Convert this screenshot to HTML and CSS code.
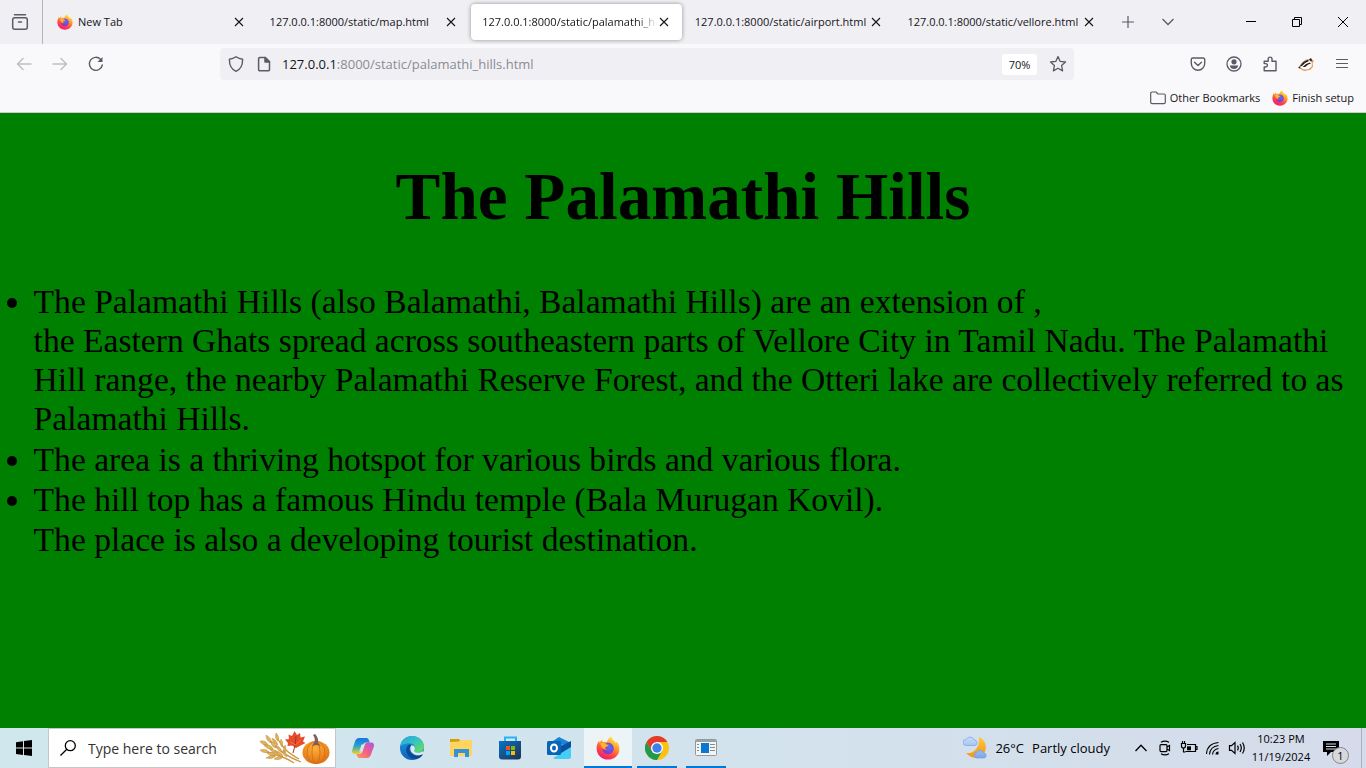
FILE: index.html
```html
<!DOCTYPE html>
<html lang="en">
<head>
<meta charset="utf-8">
<meta name="viewport" content="width=device-width, initial-scale=1">
<title>The Palamathi Hills</title>
<link rel="stylesheet" href="styles.css">
</head>
<body>
<svg class="defs" aria-hidden="true">
  <defs>
    <linearGradient id="fx-body" x1=".8" y1="0" x2=".3" y2="1"><stop offset="0" stop-color="#fff44f"/><stop offset=".35" stop-color="#ffa72b"/><stop offset=".65" stop-color="#ff4f3e"/><stop offset="1" stop-color="#f0147a"/></linearGradient>
    <radialGradient id="fx-core" cx=".6" cy=".4" r=".7"><stop offset="0" stop-color="#5b6df8"/><stop offset="1" stop-color="#8a2cc4"/></radialGradient>
    <symbol id="firefox" viewBox="0 0 24 24">
      <path fill="url(#fx-body)" d="M15.4.5c.2 2 1.300 3.200 3 4.700.8.700 1.300 1.500 1.600 2.300l.4-2.200c2 2.200 3 4.900 3 7.600C23.400 18.900 18.500 23.600 12 23.600S.6 18.700.6 12.500c0-3.300 1-5.800 2.600-7.900l.3 2.100L6.200 3.500l.2 2.800c1.500-.7 3.100-.7 4.500-.3C11.500 3.600 13 1.700 15.400.5z"/>
      <path fill="url(#fx-core)" d="M12.600 6.700c3 .3 5.100 2.700 5.100 5.800 0 3.300-2.400 5.700-5.600 5.700-3.100 0-5.600-2.200-5.700-5.200 1.300 1.400 3.800 1.500 5 0-1.600-.1-2.600-.9-2.700-2.100 1-.4 1.700-.2 3.100-1.300-1.500-.2-2-.6-2.900-1.300.9-1 2.200-1.600 3.700-1.600z"/>
      <path fill="#ffb52e" d="M3.700 7.500c2.200-1 4.700-.7 6.300.8 1 .4 2.100.4 2.900.3-.5 1.300-1.600 2-3.100 2.300-.8.300-.9 1.200 0 2-2.800.2-4.600-1.600-4.600-3.600z"/>
    </symbol>
    <symbol id="close" viewBox="0 0 10 10"><path d="M1 1l8 8M9 1L1 9" fill="none" stroke="currentColor" stroke-width="1.100"/></symbol>
    <linearGradient id="cp-a" x1="0" y1="0" x2="0" y2="1"><stop offset="0" stop-color="#1a73e8"/><stop offset=".5" stop-color="#22a6c9"/><stop offset="1" stop-color="#f2cf2e"/></linearGradient>
    <linearGradient id="cp-b" x1="1" y1="0" x2="0" y2="1"><stop offset="0" stop-color="#a957e8"/><stop offset=".5" stop-color="#ef5f8b"/><stop offset="1" stop-color="#ff9a4d"/></linearGradient>
    <linearGradient id="ed-a" x1="0" y1="0" x2="1" y2="1"><stop offset="0" stop-color="#23a3df"/><stop offset=".45" stop-color="#35c1c4"/><stop offset="1" stop-color="#6ae34e"/></linearGradient>
    <linearGradient id="ed-b" x1="0" y1="0" x2="0" y2="1"><stop offset="0" stop-color="#1b9de2"/><stop offset="1" stop-color="#1161b7"/></linearGradient>
    <linearGradient id="store" x1="0" y1="0" x2="1" y2="1"><stop offset="0" stop-color="#0873c9"/><stop offset="1" stop-color="#20304f"/></linearGradient>
    <linearGradient id="moon" x1="0" y1="0" x2="0" y2="1"><stop offset="0" stop-color="#ffc83d"/><stop offset="1" stop-color="#f2951d"/></linearGradient>
    <linearGradient id="cloud" x1="0" y1="0" x2="0" y2="1"><stop offset="0" stop-color="#c5dcfb"/><stop offset="1" stop-color="#7da6ea"/></linearGradient>
    <radialGradient id="pumpkin" cx=".45" cy=".3" r=".8"><stop offset="0" stop-color="#ffb13a"/><stop offset="1" stop-color="#db680d"/></radialGradient>
  </defs>
</svg>

<header class="browser">
  <div class="tab-strip">
    <button class="view-button" aria-label="Firefox View">
      <svg width="18" height="18" viewBox="0 0 18 18" fill="none" stroke="currentColor" stroke-width="1.500" stroke-linecap="round"><path d="M3.500 1.700h11"/><rect x="1.700" y="4.700" width="14.600" height="11.600" rx="2"/><path d="M7.500 9h3"/></svg>
    </button>
    <nav class="tabs" aria-label="Tabs">
      <div class="tab"><svg class="favicon" width="16" height="16"><use href="#firefox"/></svg><a class="tab-title" href="#">New Tab</a><button class="tab-close" aria-label="Close tab"><svg width="10" height="10"><use href="#close"/></svg></button></div>
      <div class="tab"><a class="tab-title" href="#">127.0.0.1:8000/static/map.html</a><button class="tab-close" aria-label="Close tab"><svg width="10" height="10"><use href="#close"/></svg></button></div>
      <div class="tab tab-active"><a class="tab-title" href="#" aria-current="page">127.0.0.1:8000/static/palamathi_hills.html</a><button class="tab-close" aria-label="Close tab"><svg width="10" height="10"><use href="#close"/></svg></button></div>
      <div class="tab"><a class="tab-title" href="#">127.0.0.1:8000/static/airport.html</a><button class="tab-close" aria-label="Close tab"><svg width="10" height="10"><use href="#close"/></svg></button></div>
      <div class="tab"><a class="tab-title" href="#">127.0.0.1:8000/static/vellore.html</a><button class="tab-close" aria-label="Close tab"><svg width="10" height="10"><use href="#close"/></svg></button></div>
    </nav>
    <div class="tab-tools">
      <button aria-label="New tab"><svg width="12" height="12" viewBox="0 0 12 12" fill="none" stroke="currentColor"><path d="M6 0v12M0 6h12" stroke-width="1.200"/></svg></button>
      <button aria-label="List all tabs"><svg width="12" height="12" viewBox="0 0 12 12" fill="none" stroke="currentColor" stroke-width="1.300"><path d="M.5 3L6 8.500 11.500 3"/></svg></button>
    </div>
    <div class="window-controls">
      <button aria-label="Minimize"><svg width="10" height="10" viewBox="0 0 10 10" stroke="#000"><path d="M0 4.500h10"/></svg></button>
      <button aria-label="Restore"><svg width="10" height="10" viewBox="0 0 10 10" fill="none" stroke="#000"><path d="M.5 2.500h7v7h-7zM2.500 2.500v-2h7v7h-2"/></svg></button>
      <button aria-label="Close window"><svg width="10" height="10" viewBox="0 0 10 10" stroke="#000"><path d="M0 0l10 10M10 0L0 10"/></svg></button>
    </div>
  </div>

  <div class="toolbar">
    <div class="nav-buttons">
      <button class="muted" aria-label="Back"><svg width="16" height="16" viewBox="0 0 16 16" fill="none" stroke="currentColor" stroke-width="1.400" stroke-linecap="round" stroke-linejoin="round"><path d="M15 8H1.500M7 2.500L1.500 8 7 13.500"/></svg></button>
      <button class="muted" aria-label="Forward"><svg width="16" height="16" viewBox="0 0 16 16" fill="none" stroke="currentColor" stroke-width="1.400" stroke-linecap="round" stroke-linejoin="round"><path d="M1 8h13.500M9 2.500L14.500 8 9 13.500"/></svg></button>
      <button aria-label="Reload"><svg width="16" height="16" viewBox="0 0 16 16" fill="none" stroke="currentColor" stroke-width="1.400" stroke-linecap="round"><path d="M14.300 9A6.500 6.500 0 1 1 12.500 3.200"/><path d="M14.500 1v5h-5z" fill="currentColor" stroke="none"/></svg></button>
    </div>
    <div class="url-bar">
      <svg width="16" height="16" viewBox="0 0 16 16" fill="none" stroke="currentColor" stroke-width="1.400" stroke-linejoin="round"><path d="M8 .8c2 1.500 4.300 2.300 6.600 2.500.1 5.700-1.900 10-6.600 12C3.300 13.300 1.300 9 1.400 3.300 3.700 3.100 6 2.300 8 .8z"/></svg>
      <svg width="16" height="16" viewBox="0 0 16 16" fill="none" stroke="currentColor" stroke-width="1.500" stroke-linejoin="round"><path d="M3.800 1.500h5.500l4.200 4.200v7.800a1.200 1.200 0 0 1-1.200 1.200H3.800a1.200 1.200 0 0 1-1.200-1.200V2.700a1.200 1.200 0 0 1 1.200-1.200z"/><path d="M9 1.500v4.400h4.500z" fill="currentColor"/></svg>
      <a class="url" href="#"><span class="host">127.0.0.1</span>:8000/static/palamathi_hills.html</a>
      <button class="zoom-level">70%</button>
      <button aria-label="Bookmark this page"><svg width="18" height="18" viewBox="0 0 18 18" fill="none" stroke="currentColor" stroke-width="1.300" stroke-linejoin="round"><path d="M9 1.500l2.200 4.900 5.300.6-3.900 3.600 1 5.300L9 13.300l-4.600 2.600 1-5.300L1.500 7l5.300-.6z"/></svg></button>
    </div>
    <div class="extensions">
      <button aria-label="Save to Pocket"><svg width="16" height="16" viewBox="0 0 16 16" fill="none" stroke="currentColor" stroke-width="1.400" stroke-linecap="round" stroke-linejoin="round"><path d="M2.800 2h10.400A1.500 1.500 0 0 1 14.700 3.500V7.500a6.700 6.700 0 0 1-13.400 0v-4A1.500 1.500 0 0 1 2.800 2z"/><path d="M4.500 6.200L8 9.400l3.500-3.200"/></svg></button>
      <button aria-label="Account"><svg width="16" height="16" viewBox="0 0 16 16" fill="none" stroke="currentColor" stroke-width="1.300"><circle cx="8" cy="8" r="7"/><circle cx="8" cy="5.800" r="2.600" fill="currentColor" stroke="none"/><path d="M3.700 9.500h8.600c-.5 2.400-2.200 3.500-4.300 3.500s-3.800-1.100-4.300-3.500z" fill="currentColor" stroke="none"/></svg></button>
      <button aria-label="Extensions"><svg width="16" height="16" viewBox="0 0 16 16" fill="none" stroke="currentColor" stroke-width="1.400" stroke-linejoin="round"><path d="M2.200 5.200h4V3a1.900 1.900 0 0 1 3.800 0v2.200h4v9.500H2.200V11h1.500a1.700 1.700 0 0 0 0-3.400H2.200z"/></svg></button>
      <button aria-label="Privacy Badger"><svg width="16" height="14" viewBox="0 0 18 16"><path fill="#e0965a" d="M0 12.500l3.500-5.500 5-4 4-.5 2-1.500 1.500 2 2 1-1.500 3 .5 4-3 3.500-7 1.500z"/><path fill="#fff" d="M1.500 11.500L6 6.500l6-3 3.500 2.500v5l-4 3-5 .2z"/><path fill="#222" d="M1.500 11L6 5.800l5-2.600 1.500 1.300-4.500 2.300-3.500 3.500zM5 11.500l4-3.500 4.500-1.800 1 1.500-3 1-3.500 2.800zM12.500 2.500l2.300-1 1.200 2.500-1.500.8zM.8 11l2 .3-1 1.500-1.500-.5z"/></svg></button>
      <button aria-label="Menu"><svg width="16" height="16" viewBox="0 0 16 16" fill="none" stroke="currentColor" stroke-width="1.200" stroke-linecap="round"><path d="M2.500 3.500h11M2.500 7.500h11M2.500 11.500h11"/></svg></button>
    </div>
  </div>

  <div class="bookmarks">
    <a href="#"><svg width="16" height="16" viewBox="0 0 16 16" fill="none" stroke="#5b5b66" stroke-width="1.200" stroke-linejoin="round"><path d="M2 2h4l2 2h6a1.300 1.300 0 0 1 1.300 1.300v7A1.300 1.300 0 0 1 14 13.600H2A1.300 1.300 0 0 1 .7 12.300V3.300A1.300 1.300 0 0 1 2 2z"/></svg>Other Bookmarks</a>
    <a href="#"><svg width="16" height="16"><use href="#firefox"/></svg>Finish setup</a>
  </div>
</header>

<main class="page">
  <h1>The Palamathi Hills</h1>
  <ul>
    <li>The Palamathi Hills (also Balamathi, Balamathi Hills) are an extension of ,<br>the Eastern Ghats spread across southeastern parts of Vellore City in Tamil Nadu. The Palamathi Hill range, the nearby Palamathi Reserve Forest, and the Otteri lake are collectively referred to as Palamathi Hills.</li>
    <li>The area is a thriving hotspot for various birds and various flora.</li>
    <li>The hill top has a famous Hindu temple (Bala Murugan Kovil).<br>The place is also a developing tourist destination.</li>
  </ul>
</main>

<footer class="taskbar">
  <button class="start" aria-label="Start"><svg width="16" height="16" viewBox="0 0 16 16"><path d="M0 2.200L7 1.200v6.400H0zM8 1.100L16 0v7.600H8zM0 8.500h7v6.400l-7-1zM8 8.500h8V16l-8-1.100z"/></svg></button>
  <label class="search">
    <svg width="16" height="16" viewBox="0 0 16 16" fill="none" stroke="#000" stroke-width="1.300"><circle cx="10.300" cy="5.700" r="5"/><path d="M6.800 9.200L.5 15.500"/></svg>
    <input type="text" placeholder="Type here to search" aria-label="Type here to search">
    <svg width="72" height="34" viewBox="0 0 72 34">
      <g stroke="#c9953f" stroke-width="1.300" fill="none"><path d="M9 8c9 9 15 16 33 23M5 20c11 3 23 7 30 12M17 4c5 11 10 17 23 24"/></g>
      <g fill="#e0b35c" stroke="#b98231" stroke-width=".4">
        <path d="M1 10q6-1 8 4-6 1-8-4zM7 4q6 3 5 8-5-2-5-8zM5 14q7-1 9 4-6 1-9-4zM12 10q5 2 5 7-5-1-5-7zM11 18q6 0 8 4-6 1-8-4zM17 2q4 3 2 8-4-3-2-8zM13 7q5 2 6 7-5-1-6-7zM22 8q3 4 1 8-3-3-1-8zM17 14q5 2 6 7-6-2-6-7zM26 14q2 4 0 8-3-3 0-8zM1 19q6-2 9 2-6 2-9-2zM8 22q6-2 9 2-6 2-9-2zM7 27q5-4 10-2-4 4-10 2zM15 28q4-4 9-2-3 4-9 2zM16 20q6 0 8 5-6 0-8-5zM24 19q4 3 4 7-5-2-4-7z"/>
      </g>
      <path fill="#e84a2c" d="M35.500 0l2.500 4 3-2 .5 4.500 4.500-1-2 5 2.500 1.500-5 2.500-4.500 2.500-4-2.500-4.500.5.500-3-3-3.500 4-.5-.5-4.500 3.500 1.500z"/><path d="M37 5q0 9-3 17" fill="none" stroke="#a8351f" stroke-width="1"/><path d="M36.500 14l-5-3M36.500 14l5-5" stroke="#ff8a42" stroke-width=".7"/>
      <ellipse cx="57" cy="21.500" rx="13.500" ry="11.500" fill="url(#pumpkin)"/>
      <g fill="none" stroke="#d26a10" stroke-width=".8"><ellipse cx="57" cy="21.500" rx="4" ry="11"/><ellipse cx="57" cy="21.500" rx="9" ry="11"/></g>
      <path fill="#7d6257" d="M55 12q2-4-1-8l2-1q4 4 3 9 2 2 3 3-3-1-5-1l-4 1z"/>
    </svg>
  </label>

  <nav class="apps" aria-label="Taskbar apps">
    <button class="app" aria-label="Copilot"><svg width="24" height="24" viewBox="0 0 24 24"><path fill="url(#cp-a)" d="M8 2h7.500c1.500 0 2 1 2.500 2.500l.7 2H15c-1.600 0-2.500 1-3 2.600l-2.200 6.600c-.5 1.500-1.500 2.200-3 2.200H4c-2.500 0-3.500-1.800-2.800-4L4 5.500C4.800 3.200 6 2 8 2z"/><path fill="url(#cp-b)" d="M16 22H8.500C7 22 6.500 21 6 19.600l-.6-1.700H8c2 0 3-1 3.500-2.600l2.300-6.700c.5-1.500 1.500-2.200 3-2.200h3.300c2.500 0 3.500 1.800 2.800 4L20 18.500c-.8 2.300-2 3.500-4 3.500z"/><path fill="#d2e5ed" d="M10.500 8.500h3.300l-2.500 7h-3z"/></svg></button>
    <button class="app" aria-label="Edge"><svg width="26" height="26" viewBox="0 0 26 26"><circle cx="13" cy="13" r="12" fill="url(#ed-b)"/><path fill="url(#ed-a)" d="M1.200 11C2.500 5 7 1 13 1c7 0 12 4.800 12 10.500 0 4-3 6-6.300 6-2.500 0-4.300-.8-3.200-2.300 1.600-2.300.3-7-5-7C6.800 8.200 3.200 9.500 1.200 11z"/><path fill="#0b4a90" d="M9.700 9.700c-2.500 2-3.200 5.700-1.500 9 2 4 6.500 6.300 10.500 5 2.500-1 4.200-2.500 5.300-4.500-5 2.800-12.500 1.200-13.500-4.200-.3-2 .5-3.800 2-4.800-.8-.7-1.800-1-2.800-.5z"/><path fill="#d8e9f0" d="M12.500 10.200c3 .2 4.200 2.700 3 5-.8 1.500.9 2.400 3.400 2.400 2 0 3.600-.5 4.800-1.700l1.300 2c-4.500 4.200-12 2.500-13.500-2.900-.5-2 0-3.800 1-4.800z"/></svg></button>
    <button class="app" aria-label="File Explorer"><svg width="24" height="24" viewBox="0 0 24 24"><path fill="#d99b08" d="M1 3h9l2 3H1z"/><path fill="#ffd45f" d="M1 6l9-.5L12 4h11v16H1z"/><path fill="#3492d6" d="M5 13h15v8h-4v-4H9v4H5z"/></svg></button>
    <button class="app" aria-label="Microsoft Store"><svg width="24" height="24" viewBox="0 0 24 24"><path d="M7 6V1.500h11V6" fill="none" stroke="#25b5f0" stroke-width="2"/><path fill="url(#store)" d="M1 5h22v15.500a3 3 0 0 1-3 3H4a3 3 0 0 1-3-3z"/><path fill="#f25022" d="M8 10h4v4H8z"/><path fill="#7fba00" d="M13 10h4v4h-4z"/><path fill="#00a4ef" d="M8 15h4v4H8z"/><path fill="#ffb900" d="M13 15h4v4h-4z"/></svg></button>
    <button class="app" aria-label="Outlook"><svg width="26" height="24" viewBox="0 0 26 24"><path fill="#1684d8" d="M4 7l9-6 12 6v10H4z"/><path fill="#2a9be4" d="M7 8h13v9H7z"/><path fill="#0b4f9e" d="M15 10l10-5v8l-10 6z"/><path fill="#45cdf6" d="M7 22l18-11v9.500a2.500 2.500 0 0 1-2.500 2.500H9z"/><rect x="1" y="5" width="14" height="14" rx="1.500" fill="#0864b5"/><ellipse cx="8" cy="12" rx="3" ry="3.600" fill="none" stroke="#fff" stroke-width="2"/></svg></button>
    <button class="app app-running app-active" aria-label="Firefox"><svg width="24" height="24"><use href="#firefox"/></svg></button>
    <button class="app app-running" aria-label="Chrome"><svg width="24" height="24" viewBox="0 0 24 24"><circle cx="12" cy="12" r="12" fill="#fbc116"/><path fill="#e33b2e" d="M1.600 6A12 12 0 0 1 22.400 6H12l-5.200 9z"/><path fill="#229a4d" d="M1.600 6A12 12 0 0 0 12 24l5.200-9H6.800z"/><circle cx="12" cy="12" r="6" fill="#fff"/><circle cx="12" cy="12" r="4.700" fill="#3f80ee"/></svg></button>
    <button class="app app-running" aria-label="Application window"><svg width="22" height="18" viewBox="0 0 22 18"><rect x=".5" y=".5" width="21" height="16" rx="1" fill="#f4f4f4" stroke="#929a9e"/><path fill="#9aa4a8" d="M1 1h20v2H1z"/><path fill="#0877d2" d="M6 4h8v10H6z"/><path stroke="#858d91" d="M2 5.500h2M2 8.500h2M2 11.500h2M15 5.500h5M15 8.500h5M15 11.500h5"/></svg></button>
  </nav>

  <div class="tray">
    <button class="weather"><svg width="24" height="24" viewBox="0 0 24 24"><path fill="url(#moon)" d="M16 1c6 2.500 8.500 9 6 14.500C19 23 9 24 3 17c8 1 14-6 13-16z"/><path fill="url(#cloud)" stroke="#6f98dd" stroke-width=".6" d="M3 9.500a3 3 0 0 1 0-6 4.500 4.500 0 0 1 8.200.5 2.800 2.800 0 0 1 .8 5.500zM13.500 22a2.800 2.800 0 0 1 0-5.500 4 4 0 0 1 7.300.3 2.700 2.700 0 0 1 .7 5.200z"/></svg><span>26°C</span><span>Partly cloudy</span></button>
    <div class="tray-icons">
      <button aria-label="Show hidden icons"><svg width="14" height="16" viewBox="0 0 14 16" fill="none" stroke="#000" stroke-width="1.300"><path d="M1.500 11L7 5.300 12.500 11"/></svg></button>
      <button aria-label="Meet Now"><svg width="14" height="16" viewBox="0 0 14 16" fill="none" stroke="#000" stroke-width="1.200"><rect x="2" y="4.600" width="7" height="7" rx="1"/><path d="M9 7l2.500-1.500v5L9 9.200M3 2.300q4-2.500 8 0M3 13.700q4 2.500 8 0"/></svg></button>
      <button aria-label="Battery"><svg width="18" height="16" viewBox="0 0 18 16" fill="none" stroke="#000" stroke-width="1.200"><path d="M7 4.500h8.500v7H5.500M15.500 6.500h1.500v3h-1.500M1.500 3v3q0 2 2 2t2-2V3M2.500 1v2M4.500 1v2M.8 3.500h5.400M3.500 8v4h2"/><path d="M7 6.300h4v4H7z" fill="#000" stroke="none"/></svg></button>
      <button aria-label="Network"><svg width="16" height="16" viewBox="0 0 16 16" fill="none" stroke="#000" stroke-width="1.100"><path d="M1.500 14Q2 3.500 13.500 2.500M4.500 14.500Q5 6.500 13.500 5.500M7.500 14.500Q8 9.500 13.500 8.500"/><path d="M10.500 14.500q0-3 3-3v3z" fill="#000" stroke="none"/></svg></button>
      <button aria-label="Volume"><svg width="18" height="16" viewBox="0 0 18 16" fill="none" stroke="#000" stroke-width="1.200"><path d="M1.500 5.700h2L7 2.500v11l-3.500-3.200h-2zM9.500 5.700q1.500 2.300 0 4.600M12 4q2.600 4 0 8M14.500 2.500q3.500 5.500 0 11"/></svg></button>
    </div>
    <button class="clock"><time datetime="22:23">10:23 PM</time><time datetime="2024-11-19">11/19/2024</time></button>
    <button class="notifications" aria-label="1 notification"><svg width="17" height="17" viewBox="0 0 17 17"><path d="M0 1h16v11H8l-4 4v-4H0z"/><path stroke="#d4dcea" stroke-width="1.200" d="M3 4h10M3 6.500h10M3 9h10"/></svg><span class="badge">1</span></button>
    <button class="show-desktop" aria-label="Show desktop"></button>
  </div>
</footer>
</body>
</html>
```
FILE: styles.css
```css
* { box-sizing: border-box; }
body {
  margin: 0;
  min-height: 100vh;
  display: flex;
  flex-direction: column;
  background: green;
  font-family: "Open Sans", "Noto Sans", sans-serif;
  font-size: 11px;
  color: #15141a;
}
button {
  display: flex;
  align-items: center;
  justify-content: center;
  border: 0;
  padding: 0;
  background: none;
  color: inherit;
  font: inherit;
}
a { color: inherit; text-decoration: none; }
svg { display: block; flex: none; }
.defs { position: absolute; width: 0; height: 0; }

.browser { background: #f9f9fb; border-bottom: 1px solid #ccccd2; color: #5b5b66; }
.tab-strip { display: flex; height: 44px; background: #f0f0f4; }
.view-button { width: 43px; padding-right: 3px; border-right: 1px solid #b5b5bb; }
.tabs { flex: 0 1 1063px; min-width: 0; margin-left: 2px; display: flex; padding: 4px 0; color: #15141a; }
.tab { flex: 1 1 0; min-width: 0; display: flex; align-items: center; margin: 0 1px; padding: 0 13px 0 11px; border-radius: 4px; }
.tab-active { background: #fff; box-shadow: 0 0 4px rgba(0, 0, 0, .4); }
.favicon { margin-right: 5px; }
.tab-title { flex: 1; min-width: 0; overflow: hidden; white-space: nowrap; line-height: 20px; }
.tab-active .tab-title { mask-image: linear-gradient(to left, transparent, #000 20px); }
.tab-close { margin-left: 2px; }
.tab-tools { display: flex; gap: 28px; margin-left: 14px; }
.window-controls { display: flex; margin-left: auto; }
.window-controls button { width: 46px; }

.toolbar { display: flex; align-items: center; padding: 4px 16px; }
.nav-buttons { display: flex; gap: 20px; width: 204px; }
.muted { color: #bdbdc3; }
.url-bar { flex: 0 1 854px; min-width: 0; height: 32px; display: flex; align-items: center; gap: 12px; padding: 0 7px 0 8px; border-radius: 4px; background: #f0f0f4; }
.url { flex: 1; min-width: 0; overflow: hidden; white-space: nowrap; font-size: 13px; line-height: 20px; color: #8b8b93; margin-left: -2px; }
.host { color: #15141a; }
.zoom-level { width: 35px; height: 21px; border-radius: 3px; background: #fff; color: #15141a; }
.extensions { display: flex; gap: 20px; margin-left: auto; }

.bookmarks { display: flex; justify-content: flex-end; gap: 12px; padding: 4px 12px 4px 0; color: #15141a; }
.bookmarks a { display: flex; align-items: center; gap: 4px; line-height: 20px; }

/* Page content at the 70% zoom level shown in the address bar */
.page { flex: 1; zoom: 70%; padding: 0 8px; color: #000; font-family: "Liberation Serif", "Times New Roman", serif; }
.page h1 { margin: 64px 0 67px; font-size: 96px; line-height: 110px; text-align: center; }
.page ul { margin: 0; padding-left: 40px; display: grid; gap: 2px; font-size: 48px; line-height: 56px; }

.taskbar { display: flex; height: 40px; background: linear-gradient(90deg, #d0e7ee, #d2e3ed 50%, #d5dbea); color: #000; }
.start { width: 48px; }
.search { width: 288px; display: flex; align-items: center; padding: 0 4px 0 11px; border: 1px solid #c6c6c6; background: #fff; }
.search input { flex: 1; min-width: 0; margin-left: 12px; padding: 0; border: 0; outline: 0; background: none; font: inherit; font-size: 14px; }
.search input::placeholder { color: #333; opacity: 1; }
.apps { display: flex; gap: 1px; margin-left: 3px; }
.app { width: 48px; }
.app-running { background: linear-gradient(#0078d7, #0078d7) center bottom / 40px 2px no-repeat; }
.app-active { background: linear-gradient(#0078d7, #0078d7) center bottom / 48px 2px no-repeat #edf4f7; }
.tray { display: flex; margin-left: auto; }
.weather { gap: 8px; margin-right: 19px; font-size: 13px; white-space: nowrap; }
.tray-icons { display: flex; }
.tray-icons button { width: 24px; }
.clock { flex-direction: column; width: 64px; line-height: 18px; }
.notifications { position: relative; width: 36px; margin-right: 12px; }
.badge { position: absolute; right: 0; bottom: 4px; width: 17px; height: 17px; border: 1px solid #858585; border-radius: 50%; background: #d6d8dc; line-height: 15px; }
.show-desktop { width: 5px; border-left: 1px solid #a9b0bb; }
```
